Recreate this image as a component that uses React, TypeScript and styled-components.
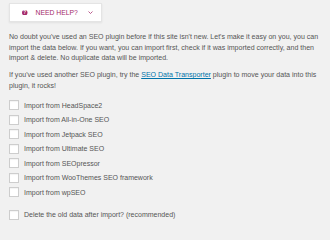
import React from "react";
import styled, { createGlobalStyle } from "styled-components";

const GlobalStyle = createGlobalStyle`
  html, body {
    margin: 0;
    padding: 0;
    background: #f1f1f1;
  }
  body {
    font-family: "Liberation Sans", Arial, sans-serif;
    color: #444;
  }
`;

const Page = styled.div`
  width: 330px;
  height: 220px;
  overflow: hidden;
  padding: 3px 4px 0 9px;
  box-sizing: border-box;
`;

const HelpButton = styled.button`
  display: flex;
  align-items: center;
  height: 19px;
  width: 93px;
  padding: 0 0 0 12px;
  box-sizing: border-box;
  background: #fff;
  border: 1px solid #e4e4e4;
  box-shadow: 0 1px 2px rgba(0, 0, 0, 0.07);
  color: #a4286a;
  font-family: "Liberation Sans", Arial, sans-serif;
  font-size: 6.8px;
  text-transform: uppercase;
  cursor: pointer;

  .label {
    margin: 0 10px 0 8px;
  }
`;

const Intro = styled.p<{ $gap?: number }>`
  margin: ${(p) => p.$gap ?? 0}px 0 0;
  font-size: 7.05px;
  line-height: 10.5px;
  color: #555;
  white-space: nowrap;

  a {
    color: #0073aa;
  }
`;

const ImportList = styled.div`
  margin-top: 9px;
  display: flex;
  flex-direction: column;
  gap: 4.5px;
`;

const Option = styled.label<{ $gap?: number }>`
  display: flex;
  align-items: center;
  gap: 5px;
  font-size: 7px;
  color: #555;
  margin-top: ${(p) => p.$gap ?? 0}px;
`;

const Box = styled.span`
  width: 10px;
  height: 10px;
  box-sizing: border-box;
  background: #fff;
  border: 1px solid #cdcdcd;
  box-shadow: inset 0 1px 1px rgba(0, 0, 0, 0.05);
  flex: none;
`;

function HelpIcon() {
  return (
    <svg width="5.5" height="5.5" viewBox="0 0 12 12">
      <circle cx="6" cy="6" r="6" fill="#a4286a" />
      <text
        x="6"
        y="9.6"
        textAnchor="middle"
        fontSize="10"
        fontWeight="bold"
        fill="#fff"
        fontFamily="Liberation Sans, Arial, sans-serif"
      >
        ?
      </text>
    </svg>
  );
}

function Chevron() {
  return (
    <svg width="5" height="3" viewBox="0 0 10 6">
      <path d="M1 1l4 4 4-4" stroke="#a4286a" strokeWidth="1.5" fill="none" />
    </svg>
  );
}

const plugins = [
  "HeadSpace2",
  "All-in-One SEO",
  "Jetpack SEO",
  "Ultimate SEO",
  "SEOpressor",
  "WooThemes SEO framework",
  "wpSEO",
];

export default function App() {
  return (
    <>
      <GlobalStyle />
      <Page>
        <HelpButton type={"button"}>
          <HelpIcon />
          <span className={"label"}>Need help?</span>
          <Chevron />
        </HelpButton>

        <Intro $gap={10}>
          No doubt you've used an SEO plugin before if this site isn't new. Let's make it easy on you, you can
          <br />
          import the data below. If you want, you can import first, check if it was imported correctly, and then
          <br />
          import &amp; delete. No duplicate data will be imported.
        </Intro>
        <Intro $gap={6.5}>
          If you've used another SEO plugin, try the <a href={"#"}>SEO Data Transporter</a> plugin to move your data into this
          <br />
          plugin, it rocks!
        </Intro>

        <ImportList>
          {plugins.map((name) => (
            <Option key={name}>
              <Box />
              Import from {name}
            </Option>
          ))}
          <Option $gap={8}>
            <Box />
            Delete the old data after import? (recommended)
          </Option>
        </ImportList>
      </Page>
    </>
  );
}
